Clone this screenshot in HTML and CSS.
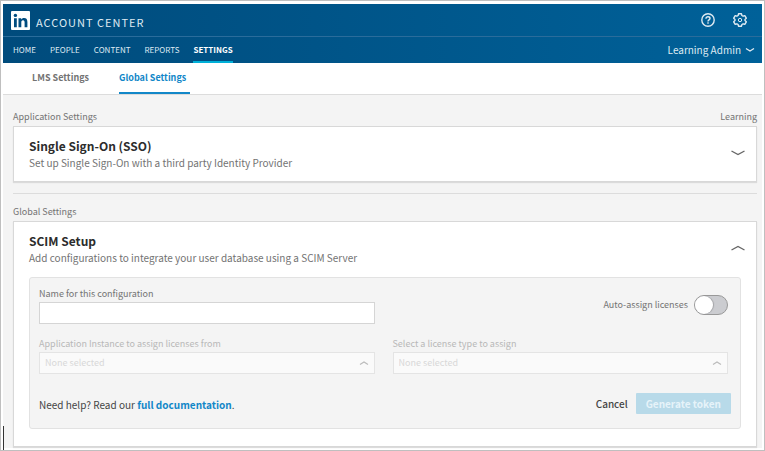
FILE: index.html
```html
<!DOCTYPE html>
<html lang="en">
<head>
    <meta charset="UTF-8">
    <meta name="viewport" content="width=device-width, initial-scale=1.0">
    <title>Account Center - Global Settings</title>
    <link rel="stylesheet" href="styles.css">
</head>
<body>
    <div class="frame">
        <header class="header">
            <div class="brand-row">
                <svg class="logo" viewBox="0 0 19 19" aria-label="LinkedIn">
                    <rect width="19" height="19" rx="1" fill="#fff"/>
                    <circle cx="4.4" cy="4.4" r="1.7" fill="#004c7f"/>
                    <path fill="#004c7f" d="M3 7.2h2.8v9H3zM7.5 7.2h2.7v1.3c.5-.9 1.5-1.5 2.8-1.5 2.6 0 3.4 1.6 3.4 4.1v5.1h-2.8v-4.7c0-1.2-.2-2.3-1.6-2.3-1.3 0-1.7 1-1.7 2.2v4.8H7.5z"/>
                </svg>
                <span class="brand">ACCOUNT CENTER</span>
                <button type="button" class="icon-button" aria-label="Help">
                    <svg width="14" height="14" viewBox="0 0 14 14" fill="none" stroke="currentColor" stroke-width="1.4">
                        <circle cx="7" cy="7" r="6.2"/>
                        <path d="M5 5.7C5 4.5 5.8 3.8 7 3.8s2 .7 2 1.7c0 1.4-2 1.4-2 2.9"/>
                        <path d="M7 9.3v1.5"/>
                    </svg>
                </button>
                <button type="button" class="icon-button" aria-label="Settings">
                    <svg width="14" height="14" viewBox="0 0 14 14" fill="none" stroke="currentColor" stroke-width="1.4" stroke-linejoin="round">
                        <path d="M5.5.8h3l.4 1.7 1.2.7 1.7-.6 1.5 2.6L12 6.4v1.2l1.3 1.2-1.5 2.6-1.7-.6-1.2.7-.4 1.7h-3l-.4-1.7-1.2-.7-1.7.6L.7 8.8 2 7.6V6.4L.7 5.2l1.5-2.6 1.7.6 1.2-.7z"/>
                        <circle cx="7" cy="7" r="1.7" stroke-width="1"/>
                    </svg>
                </button>
            </div>
            <nav class="main-nav">
                <a href="#">HOME</a>
                <a href="#">PEOPLE</a>
                <a href="#">CONTENT</a>
                <a href="#">REPORTS</a>
                <a href="#" class="active">SETTINGS</a>
                <button type="button" class="account">
                    Learning Admin
                    <svg width="10" height="6" viewBox="0 0 10 6"><path d="M1 1.5l4 2.5 4-2.5"/></svg>
                </button>
            </nav>
        </header>

        <nav class="tabs">
            <a href="#">LMS Settings</a>
            <a href="#" class="active">Global Settings</a>
        </nav>

        <main class="content">
            <!-- Application settings -->
            <section class="application">
                <div class="section-label">
                    <span>Application Settings</span>
                    <span>Learning</span>
                </div>
                <div class="card">
                    <div class="card-header">
                        <div>
                            <h2>Single Sign-On (SSO)</h2>
                            <p>Set up Single Sign-On with a third party Identity Provider</p>
                        </div>
                        <button type="button" class="toggle-card" aria-label="Expand">
                            <svg width="14" height="6" viewBox="0 0 14 6"><path d="M.5 1L7 4.5 13.5 1"/></svg>
                        </button>
                    </div>
                </div>
            </section>

            <!-- Global settings -->
            <section class="global">
                <div class="section-label">
                    <span>Global Settings</span>
                </div>
                <div class="card">
                    <div class="card-header">
                        <div>
                            <h2>SCIM Setup</h2>
                            <p>Add configurations to integrate your user database using a SCIM Server</p>
                        </div>
                        <button type="button" class="toggle-card" aria-label="Collapse">
                            <svg width="14" height="6" viewBox="0 0 14 6"><path d="M.5 5L7 1.5 13.5 5"/></svg>
                        </button>
                    </div>
                    <form class="panel">
                        <div class="fields">
                            <div class="field">
                                <label for="configName">Name for this configuration</label>
                                <input type="text" id="configName">
                            </div>
                            <div class="switch-field">
                                <label for="autoAssign">Auto-assign licenses</label>
                                <input type="checkbox" id="autoAssign" class="switch">
                            </div>
                            <div class="field disabled">
                                <label for="appInstance">Application Instance to assign licenses from</label>
                                <div class="select-wrap">
                                    <select id="appInstance" disabled>
                                        <option>None selected</option>
                                    </select>
                                    <svg width="10" height="6" viewBox="0 0 10 6"><path d="M1 4.5L5 2l4 2.5"/></svg>
                                </div>
                            </div>
                            <div class="field disabled">
                                <label for="licenseType">Select a license type to assign</label>
                                <div class="select-wrap">
                                    <select id="licenseType" disabled>
                                        <option>None selected</option>
                                    </select>
                                    <svg width="10" height="6" viewBox="0 0 10 6"><path d="M1 4.5L5 2l4 2.5"/></svg>
                                </div>
                            </div>
                        </div>
                        <div class="actions">
                            <p>Need help? Read our <a href="#">full documentation</a>.</p>
                            <button type="button" class="cancel">Cancel</button>
                            <button type="submit" class="generate" disabled>Generate token</button>
                        </div>
                    </form>
                </div>
            </section>
        </main>
        <span class="caret"></span>
    </div>
</body>
</html>
```
FILE: styles.css
```css
* {
    box-sizing: border-box;
}

body {
    margin: 0;
    font-family: "Noto Sans CJK SC", "Open Sans", sans-serif;
    font-size: 10px;
    line-height: 16px;
    color: #737373;
    background-color: #fff;
}

h2,
p {
    margin: 0;
}

a {
    color: inherit;
    text-decoration: none;
}

button {
    font: inherit;
    color: inherit;
    padding: 0;
    border: none;
    background: none;
    cursor: pointer;
}

svg {
    display: block;
}

.frame {
    position: relative;
    border: 1px solid #bfbfbf;
    padding: 3px 2px 2px;
}

/* Header */
.header {
    background: linear-gradient(90deg, #004b7c, #006199);
    color: #dfeaf2;
}

.brand-row {
    display: flex;
    align-items: center;
    height: 33px;
    padding: 0 15px 0 8px;
    border-bottom: 1px solid #2a6c9b;
}

.logo {
    width: 19px;
    height: 19px;
    margin-right: 6px;
}

.brand {
    flex: 1;
    padding-top: 3px;
    font-size: 11px;
    letter-spacing: 1px;
}

.icon-button {
    margin-left: 18px;
}

.main-nav {
    display: flex;
    height: 26px;
    padding: 0 7px 0 10px;
    gap: 14px;
    font-size: 8px;
    line-height: 26px;
}

.main-nav .active {
    color: #fff;
    font-weight: bold;
    border-bottom: 2px solid #00b0d8;
}

.account {
    display: flex;
    align-items: center;
    gap: 4px;
    margin-left: auto;
    font-size: 10px;
}

.account path {
    fill: none;
    stroke: currentColor;
    stroke-width: 1.4;
}

/* Tabs */
.tabs {
    display: flex;
    gap: 30px;
    height: 32px;
    padding-left: 29px;
    border-bottom: 1px solid #dcdcdc;
    font-size: 9px;
    font-weight: bold;
    line-height: 29px;
}

.tabs .active {
    padding-right: 4px;
    color: #1287c8;
    border-bottom: 2px solid #1287c8;
}

/* Content */
.content {
    padding: 14px 5px 1px 10px;
    background-color: #f4f4f4;
}

.section-label {
    display: flex;
    justify-content: space-between;
    margin-bottom: 1px;
    font-size: 9px;
}

.application {
    padding-bottom: 11px;
    border-bottom: 1px solid #dcdcdc;
}

.global {
    padding-top: 10px;
}

.card {
    padding: 10px 15px 17px;
    background-color: #fff;
    border: 1px solid #d8d8d8;
    box-shadow: 0 1px 1px rgba(0, 0, 0, 0.1);
}

.application .card {
    padding-bottom: 10px;
}

.card-header {
    display: flex;
    justify-content: space-between;
    align-items: center;
}

.card-header h2 {
    color: #2c2c2c;
    font-size: 12px;
    line-height: 18px;
}

.toggle-card {
    padding: 4px 4px 6px;
    margin-right: -8px;
}

.toggle-card path {
    fill: none;
    stroke: #666;
    stroke-width: 1.4;
}

/* SCIM form */
.panel {
    margin-top: 11px;
    padding: 8px 9px 14px;
    background-color: #f4f4f4;
    border: 1px solid #e2e2e2;
    border-radius: 3px;
}

.fields {
    display: grid;
    grid-template-columns: 1fr 1fr;
    gap: 12px 18px;
    padding-right: 3px;
    font-size: 9px;
}

.field label {
    display: block;
}

.field input,
.field select {
    display: block;
    width: 100%;
    height: 22px;
    padding: 0 5px;
    border: 1px solid #d5d5d5;
    border-radius: 0;
    background-color: #fff;
    font: inherit;
}

.disabled {
    color: #b8b8b8;
}

.disabled select {
    appearance: none;
    color: #d8d8d8;
    border-color: #e4e4e4;
    background-color: #fafafa;
    opacity: 1;
}

.select-wrap {
    position: relative;
}

.select-wrap svg {
    position: absolute;
    right: 6px;
    top: 8px;
}

.select-wrap path {
    fill: none;
    stroke: #bbb;
    stroke-width: 1.2;
}

.switch-field {
    display: flex;
    justify-content: flex-end;
    align-items: center;
    gap: 6px;
}

.switch {
    appearance: none;
    width: 34px;
    height: 20px;
    margin: 0;
    border: 1px solid #999;
    border-radius: 10px;
    background-color: #cbccd0;
    cursor: pointer;
}

.switch::before {
    content: "";
    display: block;
    width: 18px;
    height: 18px;
    border-radius: 50%;
    background-color: #fff;
    box-shadow: 1px 0 1px rgba(0, 0, 0, 0.2);
}

.switch:checked::before {
    margin-left: auto;
}

.actions {
    display: flex;
    align-items: center;
    margin-top: 19px;
    color: #444;
}

.actions p {
    flex: 1;
    padding-top: 2px;
}

.actions a {
    color: #1287c8;
    font-weight: bold;
}

.cancel {
    margin-right: 8px;
    font-weight: 500;
}

.generate {
    height: 21px;
    padding: 0 10px;
    color: #e6f3f9;
    font-weight: bold;
    background-color: #b8dae9;
    border-radius: 1px;
}

/* Text cursor left of the page */
.caret {
    position: absolute;
    left: 2px;
    bottom: 0;
    width: 1px;
    height: 24px;
    background-color: #333;
}
```
